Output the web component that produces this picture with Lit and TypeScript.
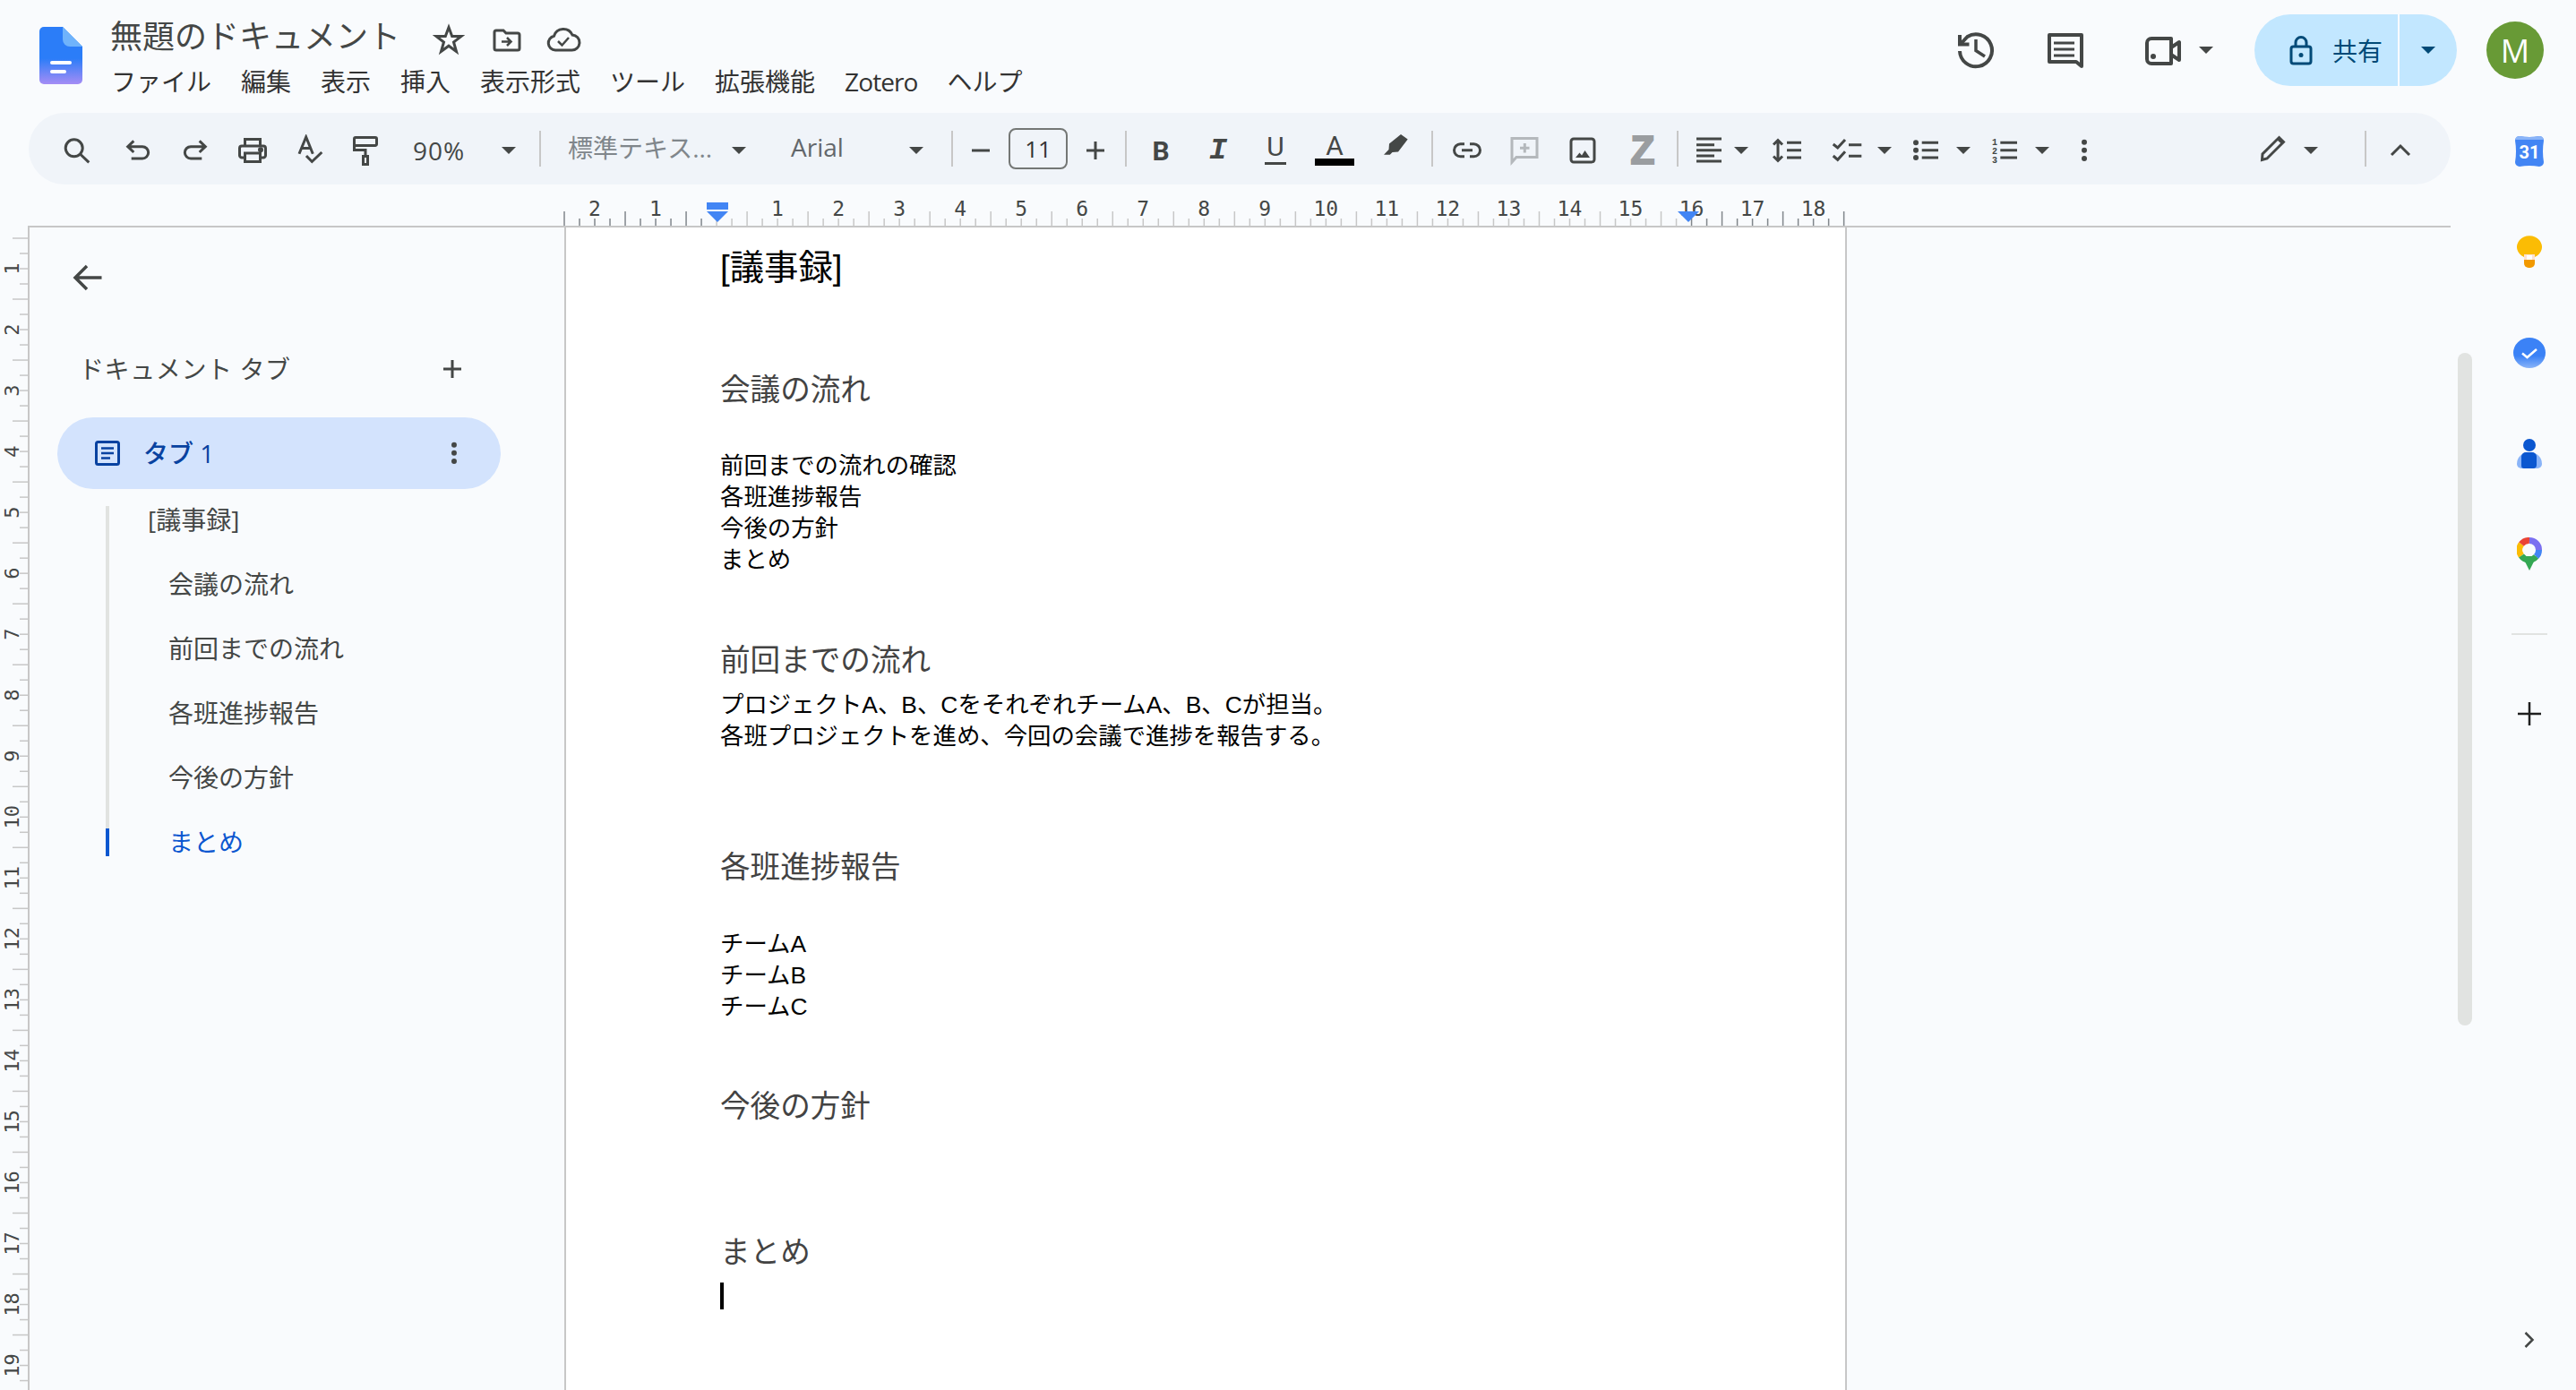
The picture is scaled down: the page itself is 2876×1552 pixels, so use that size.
import { LitElement, html, css, svg } from 'lit';
import { customElement } from 'lit/decorators.js';

const ico = (body: unknown, size = 36) =>
  html`<svg class="ico" width=${size} height=${size} viewBox="0 0 36 36">${body}</svg>`;

const caret = html`<span class="caret"></span>`;

// toolbar: c = centre x on the page, w = cell width
interface Tool { c: number; w: number; cls?: string; body?: unknown; }

const tool = (c: number, body: unknown, w = 36, cls = ''): Tool => ({ c, w, body, cls });
const car = (c: number): Tool => ({ c, w: 16, body: caret });
const sep = (c: number): Tool => ({ c, w: 2, cls: 'sep' });

const I = {
  search: svg`<circle cx="15.7" cy="15.3" r="9.5"/><path d="M22.5 22 32.3 31.3"/>`,
  undo: svg`<path d="M13.3 7.3 6.7 13.7 13.3 20M7 13.7H23a6.6 6.6 0 0 1 0 13.3H10.7"/>`,
  redo: svg`<path d="M22.7 7.3 29.3 13.7 22.7 20M29 13.7H13a6.6 6.6 0 0 0 0 13.3H25.3"/>`,
  print: svg`<path d="M9.5 13V5.5H26.5V13M9 26H6a2.5 2.5 0 0 1-2.5-2.5V15.500A2.500 2.500 0 0 1 6 13H30a2.500 2.500 0 0 1 2.500 2.500V23.500A2.500 2.500 0 0 1 30 26H27M9.500 21H26.500V30.500H9.500Z"/><circle class="f" cx="27" cy="17.300" r="1.500"/>`,
  spell: svg`<path d="M6 21.700 13.700 3 21.300 21.700M8.500 15.500H19M14 24 20.300 30.500 31.300 20"/>`,
  paint: svg`<path d="M7 3.500H29a1.500 1.500 0 0 1 1.500 1.500V11a1.500 1.500 0 0 1-1.500 1.500H7A1.500 1.500 0 0 1 5.500 11V5A1.500 1.500 0 0 1 7 3.500ZM5.500 8.500V17.500H18V24M15.500 24.500H20.500V33.500H15.500Z"/>`,
  minus: svg`<path d="M8 18H28"/>`,
  plus: svg`<path d="M8 18H28M18 8V28"/>`,
  bigplus: svg`<path stroke-width="2.500" d="M5 18H31M18 5V31"/>`,
  highlight: svg`<path class="f n" d="M24 0 31.700 5.500 21 19.500 14.500 20 11.800 22.700H5L10.500 17 11 10.500Z"/>`,
  link: svg`<path d="M15 10.800H10.500a7 7 0 0 0 0 14H15M21 10.800H25.500a7 7 0 0 1 0 14H21M12 17.800H24"/>`,
  comment: svg`<g class="dim"><path d="M4 4.500H32V25.500H9L4 31Z"/><path d="M18.300 10V20.500M13 15.200H23.500"/></g>`,
  image: svg`<rect x="5" y="5" width="26" height="26" rx="3"/><path class="f n" d="M10 26 14.500 20.500 17 23.500 20.500 18 26 26Z"/>`,
  align: svg`<path d="M4 5H32M4 11.700H24M4 17.700H32M4 24H24M4 30H32"/>`,
  spacing: svg`<path d="M8 7V29M3 11.500 8 6.500 13 11.500M3 24.500 8 29.500 13 24.500M18 9.300H34M18 17.700H34M18 26H34"/>`,
  checks: svg`<path d="M2.700 11 7.700 15 16 6M2.700 24 7.700 28.300 16 19.300M20 11.700H34.300M20 24.300H34.300"/>`,
  bullets: svg`<circle class="f n" cx="7" cy="9.300" r="3"/><circle class="f n" cx="7" cy="17.700" r="3"/><circle class="f n" cx="7" cy="26" r="3"/><path d="M13.700 9.300H32M13.700 17.700H32M13.700 26H32"/>`,
  numbers: svg`<path d="M13.300 9.300H32M13.300 17.700H32M13.300 26H32"/><text class="num" x="7" y="12">1</text><text class="num" x="7" y="22">2</text><text class="num" x="7" y="32">3</text>`,
  more: svg`<circle class="f n" cx="18" cy="8.700" r="3"/><circle class="f n" cx="18" cy="17.700" r="3"/><circle class="f n" cx="18" cy="27" r="3"/>`,
  pencil: svg`<path d="M5.500 28.500 6 22 24.500 3.500 29.500 8.500 11 27Z"/><path class="f n" d="M24.500 2.500 30.500 8.500 27.500 11 22 6Z"/>`,
  chevUp: svg`<path d="M8 23 18 13 28 23"/>`,
};

const tools: Tool[] = [
  tool(85, ico(I.search)), tool(154, ico(I.undo)), tool(218, ico(I.redo)), tool(282, ico(I.print)),
  tool(346, ico(I.spell)), tool(408, ico(I.paint)),
  tool(490, '90%', 64, 'zoom'), car(568), sep(603),
  tool(716, '標準テキス...', 164, 'dimtext'), car(825),
  tool(915, 'Arial', 64, 'dimtext fontname'), car(1023), sep(1063),
  tool(1095, ico(I.minus)), tool(1159, '11', 66, 'size'), tool(1223, ico(I.plus)), sep(1257),
  tool(1296, 'B', 36, 'bold'), tool(1360, 'I', 36, 'ital'),
  tool(1424, html`<span class="ltr">U</span><span class="ubar"></span>`, 36, 'stack'),
  tool(1490, html`<span class="ltr">A</span><span class="cbar"></span>`, 44, 'stack'),
  tool(1558, ico(I.highlight)), sep(1599),
  tool(1638, ico(I.link)), tool(1702, ico(I.comment)), tool(1767, ico(I.image)),
  tool(1834, 'Z', 36, 'zed'), sep(1873),
  tool(1908, ico(I.align)), car(1944), tool(1995, ico(I.spacing)), tool(2062, ico(I.checks)), car(2104),
  tool(2150, ico(I.bullets)), car(2192), tool(2238, ico(I.numbers)), car(2280), tool(2327, ico(I.more)),
  tool(2538, ico(I.pencil)), car(2580), sep(2641), tool(2680, ico(I.chevUp)),
];

const menus = ['ファイル', '編集', '表示', '挿入', '表示形式', 'ツール', '拡張機能', 'Zotero', 'ヘルプ'];

const outline = [
  { t: '[議事録]', cls: 'top' },
  { t: '会議の流れ', cls: '' },
  { t: '前回までの流れ', cls: '' },
  { t: '各班進捗報告', cls: '' },
  { t: '今後の方針', cls: '' },
  { t: 'まとめ', cls: 'on' },
];

const CM = 68.03;

const hruler = () => {
  const ticks = [];
  for (let k = 0; k <= 84; k++) {
    const x = 630 + k * (CM / 4);
    const long = k % 4 === 0;
    const dark = x < 800 || x > 1886;
    ticks.push(svg`<line x1=${x} x2=${x} y1=${long ? 30 : 38} y2="46" stroke=${dark ? '#80868b' : '#c7c7c7'} stroke-width="1.500"/>`);
  }
  const labels = [-2, -1, ...Array.from({ length: 18 }, (_, i) => i + 1)];
  return html`<svg class="ruler" width="2736" height="48" viewBox="0 0 2736 48">
    <rect x="31" y="46" width="2705" height="2" fill="#c7c7c7"/>
    ${ticks}
    ${labels.map(n => svg`<text class="rnum" x=${800 + n * CM} y="34.500">${Math.abs(n)}</text>`)}
    <rect x="789" y="20" width="24" height="8" fill="#4285f4"/>
    <path d="M789 30H813L801 42Z" fill="#4285f4"/>
    <path d="M1873 30H1897L1885 42Z" fill="#4285f4"/>
  </svg>`;
};

const vruler = () => {
  const ticks = [];
  for (let k = 0; k <= 76; k++) {
    const y = 12 + k * (CM / 4);
    const long = k % 4 === 0;
    ticks.push(svg`<line x1=${long ? 14 : 22} x2="31" y1=${y} y2=${y} stroke="#c7c7c7" stroke-width="1.500"/>`);
  }
  return html`<svg class="vruler" width="33" height="1298" viewBox="0 0 33 1298">
    <rect x="31" y="0" width="2" height="1298" fill="#c7c7c7"/>
    ${ticks}
    ${Array.from({ length: 19 }, (_, i) => i + 1).map(n => {
      const y = 46 + (n - 1) * CM;
      return svg`<text class="rnum side" transform="translate(20.500 ${y}) rotate(-90)">${n}</text>`;
    })}
  </svg>`;
};

@customElement('app-root')
export class AppRoot extends LitElement {
  static styles = css`
    :host {
      display: flex;
      flex-direction: column;
      width: 2876px;
      height: 1552px;
      overflow: hidden;
      background: #f9fbfd;
      color: #444746;
      font-family: 'Open Sans', 'Noto Sans CJK JP', sans-serif;
    }
    .ico { display: block; fill: none; stroke: currentColor; stroke-width: 3; }
    .ico .f { fill: currentColor; }
    .ico .n { stroke: none; }
    .ico .dim { stroke: #b4b8bc; }
    .ico .num { font: 700 10px 'Liberation Mono', monospace; text-anchor: middle; fill: currentColor; stroke: none; }

    header { display: flex; height: 124px; flex: none; }
    .logo { margin: 30px 0 0 44px; flex: none; }
    .titles { margin-left: 31px; padding-top: 21px; }
    .titlerow { display: flex; align-items: center; height: 40px; }
    .title { font-size: 36px; line-height: 40px; width: 324px; }
    .titlerow .ico { margin-top: 6px; }
    .star { margin-left: 36px; }
    .folder { margin-left: 29px; }
    .cloud { margin-left: 25px; }
    .menus { display: flex; gap: 33px; margin: 10px 0 0 1px; font-size: 28px; line-height: 40px; color: #333; }
    .menus .latin { letter-spacing: -0.900px; }

    .actions { display: flex; align-items: center; margin-left: auto; height: 80px; margin-top: 16px; padding-right: 36px; }
    .comment-btn { margin-left: 55px; }
    .video-btn { margin-left: 65px; }
    .video-car { margin-left: 19px; }
    .share { display: flex; height: 80px; margin-left: 46px; color: #004a77; }
    .share-l { display: flex; align-items: center; width: 160px; padding-left: 38px; box-sizing: border-box; gap: 21px; background: #c2e7ff; border-radius: 40px 0 0 40px; font-size: 28px; white-space: nowrap; }
    .share-r { display: flex; align-items: center; justify-content: center; width: 64px; margin-left: 2px; box-sizing: border-box; background: #c2e7ff; border-radius: 0 40px 40px 0; }
    .share .caret { border-top-color: #004a77; }
    .avatar { width: 64px; height: 64px; margin-left: 33px; border-radius: 50%; background: #689a36; color: #fff; font-size: 36px; display: flex; align-items: center; justify-content: center; }

    .body { display: flex; flex: 1; min-height: 0; }
    .main { display: flex; flex-direction: column; width: 2736px; flex: none; }
    .toolbar { display: flex; align-items: center; box-sizing: border-box; height: 80px; margin: 2px 0 0 32px; padding-top: 4px; background: #f0f4f9; border-radius: 40px; flex: none; font-size: 28px; }
    .cell { display: flex; align-items: center; justify-content: center; flex: none; }
    .caret { display: block; width: 0; height: 0; border-left: 8px solid transparent; border-right: 8px solid transparent; border-top: 8px solid #444746; flex: none; }
    .sep { width: 2px; height: 40px; background: #c7c7c7; margin-top: -4px; }
    .zoom { letter-spacing: 1px; white-space: nowrap; }
    .dimtext { justify-content: flex-start; color: #80868b; white-space: nowrap; margin-bottom: 8px; }
    .fontname { color: #63676b; }
    .size { height: 46px; box-sizing: border-box; border: 2px solid #747775; border-radius: 8px; font-size: 26px; color: #333; margin-bottom: 4px; }
    .bold { font: 700 30px Roboto, sans-serif; }
    .ital { font: italic 700 34px 'Liberation Mono', monospace; }
    .stack { flex-direction: column; }
    .ltr { font: 400 30px/24px Roboto, sans-serif; }
    .ubar { width: 24px; height: 3px; margin-top: 5px; background: #444746; }
    .cbar { width: 44px; height: 8px; margin-top: 2px; background: #000; }
    .zed { font: 700 44px/36px 'Liberation Sans', sans-serif; color: #9a9da0; -webkit-text-stroke: 2px #9a9da0; }

    .ruler { display: block; flex: none; }
    .vruler { display: block; flex: none; }
    .rnum { font: 400 23px 'DejaVu Sans Mono', monospace; fill: #444746; text-anchor: middle; }
    .rnum.side { font-size: 22px; }

    .work { display: flex; flex: 1; min-height: 0; }
    .sidebar { width: 597px; flex: none; }
    .back { margin: 34px 0 0 43px; width: 44px; height: 44px; }
    .back .ico { stroke-width: 3.500; }
    .sechead { display: flex; align-items: center; height: 44px; margin-top: 58px; padding-left: 55px; font-size: 28px; }
    .sechead span { margin-top: -3px; letter-spacing: 0.600px; }
    .sechead .ico { margin-left: 162px; }
    .tab { display: flex; align-items: center; height: 80px; width: 495px; margin: 32px 0 0 31px; border-radius: 40px; background: #d3e3fd; color: #0842a0; font-size: 28px; font-weight: 500; }
    .tab .doc { margin-left: 42px; }
    .tab span { margin: -2px 0 0 26px; }
    .tab .dots { margin-left: 250px; color: #444746; }
    .outline { display: flex; flex-direction: column; gap: 41px; margin: 19px 0 0 85px; border-left: 4px solid #e1e3e1; font-size: 28px; }
    .outline div { height: 31px; line-height: 31px; padding-left: 66px; white-space: nowrap; }
    .outline .top { padding-left: 43px; }
    .outline .on { margin-left: -4px; border-left: 4px solid #0b57d0; color: #0b57d0; }

    .page { width: 1432px; flex: none; box-sizing: border-box; padding: 22px 0 0 172px; background: #fff; border-left: 2px solid #c7c7c7; border-right: 2px solid #c7c7c7; color: #000; font-family: 'Liberation Sans', 'Noto Sans CJK JP', sans-serif; }
    .page h1 { margin: 0; font-size: 38.4px; font-weight: 400; line-height: 46px; }
    .page h2 { margin: 0; font-size: 33.6px; font-weight: 400; line-height: 42px; color: #434343; }
    .page p { margin: 0; font-size: 26.4px; line-height: 35px; }
    .g93 { margin-top: 93px !important; }
    .g46 { margin-top: 46px !important; }
    .g74 { margin-top: 74px !important; }
    .g11 { margin-top: 11px !important; }
    .g108 { margin-top: 108px !important; }
    .g47 { margin-top: 47px !important; }
    .g73 { margin-top: 73px !important; }
    .g121 { margin-top: 121px !important; }
    .cursor { width: 4px; height: 30px; margin-top: 12px; background: #000; }

    .track { width: 24px; flex: none; padding-left: 8px; box-sizing: border-box; }
    .thumb { width: 16px; height: 751px; margin-top: 270px; background: #e1e3e1; border-radius: 8px; }

    .panel { display: flex; flex-direction: column; align-items: center; box-sizing: border-box; width: 116px; flex: none; padding: 23px 0 38px 12px; }
    .slot { display: flex; align-items: center; justify-content: center; width: 44px; height: 44px; flex: none; }
    .slot + .slot { margin-top: 68.400px; }
    .hr { width: 40px; height: 2px; margin-top: 66px; background: #e1e3e1; flex: none; }
    .addon { margin-top: 66px; color: #1f1f1f; }
    .chev { margin-top: auto; }
    svg text.cal { font: 700 20px Roboto, sans-serif; fill: #fff; text-anchor: middle; }
  `;

  private toolbar() {
    let right = 32;
    return tools.map(t => {
      const left = t.c - t.w / 2;
      const gap = left - right;
      right = t.c + t.w / 2;
      return html`<div class="cell ${t.cls}" style="margin-left:${gap}px;width:${t.w}px">${t.body}</div>`;
    });
  }

  render() {
    return html`
      <header>
        <svg class="logo" width="48" height="64" viewBox="0 0 48 64">
          <defs>
            <linearGradient id="docg" x1="0" y1="0" x2="0" y2="1">
              <stop offset="0.550" stop-color="#2b7df8"/>
              <stop offset="1" stop-color="#a58df5"/>
            </linearGradient>
          </defs>
          <path d="M5 0H26L48 22V59a5 5 0 0 1-5 5H5a5 5 0 0 1-5-5V5a5 5 0 0 1 5-5Z" fill="url(#docg)"/>
          <path d="M26 0 48 22H34a8 8 0 0 1-8-8Z" fill="#6fb3fb"/>
          <rect x="12" y="38" width="24" height="4" rx="2" fill="#fff"/>
          <rect x="12" y="48" width="18" height="4" rx="2" fill="#fff"/>
        </svg>
        <div class="titles">
          <div class="titlerow">
            <div class="title">無題のドキュメント</div>
            <svg class="ico star" width="36" height="36" viewBox="0 0 36 36"><path d="M18 4.500 21.700 14.500H32L23.500 21 26.500 31.500 18 25.200 9.500 31.500 12.500 21 4 14.500H14.300Z"/></svg>
            <svg class="ico folder" width="36" height="36" viewBox="0 0 36 36"><path d="M4 10a2 2 0 0 1 2-2H14L17 11H30a2 2 0 0 1 2 2V28a2 2 0 0 1-2 2H6a2 2 0 0 1-2-2Z"/><path stroke-width="2.500" d="M12 20.500H22M18 16 22.500 20.500 18 25"/></svg>
            <svg class="ico cloud" width="40" height="36" viewBox="0 0 40 36"><path d="M11 30a8 8 0 0 1-1.500-15.800A11 11 0 0 1 30 13a8.500 8.500 0 0 1-1 17Z"/><path stroke-width="2.500" d="M14 20 18.500 24.500 26 16"/></svg>
          </div>
          <div class="menus">${menus.map(m => html`<span class=${m === 'Zotero' ? 'latin' : ''}>${m}</span>`)}</div>
        </div>
        <div class="actions">
          <svg class="ico" width="44" height="44" viewBox="-22 -22 44 44" stroke-width="4"><path d="M-18 -17V-6.500H-7.500" stroke-width="4"/><path stroke-width="4" d="M-16.500 -7.500-9.500 -15A18 18 0 1 1-18 1"/><path stroke-width="3.500" d="M0 -12V0.500L10 7"/></svg>
          <svg class="ico comment-btn" width="44" height="44" viewBox="-22 -22 44 44"><path stroke-width="4" stroke-linejoin="round" d="M-17 -17H19V18L13 13H-17Z"/><path stroke-width="3" d="M-12 -8H11M-12 -1H11M-12 6H11"/></svg>
          <svg class="ico video-btn" width="44" height="44" viewBox="-22 -22 44 44"><path stroke-width="4" stroke-linejoin="round" d="M-12 -13H10V15H-12a5 5 0 0 1-5-5V-8a5 5 0 0 1 5-5ZM10 -3 19 -9V11L10 5"/><circle class="f n" cx="-10" cy="7" r="3"/></svg>
          <span class="caret video-car"></span>
          <div class="share">
            <div class="share-l">
              <svg class="ico" width="28" height="36" viewBox="0 0 28 36"><rect x="3" y="14" width="22" height="19" rx="2.500"/><path d="M8 14V9.500a6 6 0 0 1 12 0V14"/><circle class="f n" cx="14" cy="23.500" r="2.500"/></svg>
              <span>共有</span>
            </div>
            <div class="share-r">${caret}</div>
          </div>
          <div class="avatar">M</div>
        </div>
      </header>

      <div class="body">
        <div class="main">
          <div class="toolbar">${this.toolbar()}</div>
          ${hruler()}
          <div class="work">
            ${vruler()}
            <aside class="sidebar">
              <div class="back"><svg class="ico" width="44" height="44" viewBox="0 0 44 44"><path d="M37.500 22H8M21 9 8 22 21 35"/></svg></div>
              <div class="sechead"><span>ドキュメント タブ</span>${ico(I.plus)}</div>
              <div class="tab">
                <svg class="ico doc" width="28" height="28" viewBox="0 0 28 28"><rect x="1.500" y="1.500" width="25" height="25" rx="2"/><path stroke-width="2.500" d="M7 8.500H21M7 14H21M7 19.500H17"/></svg>
                <span>タブ 1</span>
                <svg class="ico dots" width="36" height="36" viewBox="0 0 36 36">${I.more}</svg>
              </div>
              <nav class="outline">${outline.map(o => html`<div class=${o.cls}>${o.t}</div>`)}</nav>
            </aside>
            <article class="page">
              <h1>[議事録]</h1>
              <h2 class="g93">会議の流れ</h2>
              <p class="g46">前回までの流れの確認</p>
              <p>各班進捗報告</p>
              <p>今後の方針</p>
              <p>まとめ</p>
              <h2 class="g74">前回までの流れ</h2>
              <p class="g11">プロジェクトA、B、CをそれぞれチームA、B、Cが担当。</p>
              <p>各班プロジェクトを進め、今回の会議で進捗を報告する。</p>
              <h2 class="g108">各班進捗報告</h2>
              <p class="g47">チームA</p>
              <p>チームB</p>
              <p>チームC</p>
              <h2 class="g73">今後の方針</h2>
              <h2 class="g121">まとめ</h2>
              <div class="cursor"></div>
            </article>
          </div>
        </div>
        <div class="track"><div class="thumb"></div></div>
        <aside class="panel">
          <div class="slot">
            <svg width="32" height="34" viewBox="0 0 32 34">
              <path d="M5 0Q16 2 27 0a5 5 0 0 1 5 5Q30 17 32 29a5 5 0 0 1-5 5Q16 32 5 34a5 5 0 0 1-5-5Q2 17 0 5a5 5 0 0 1 5-5Z" fill="#4285f4"/>
              <path d="M5 0Q16 2 27 0a5 5 0 0 1 5 4H0a5 5 0 0 1 5-4Z" fill="#8ab4f8"/>
              <text class="cal" x="16" y="25">31</text>
            </svg>
          </div>
          <div class="slot">
            <svg width="28" height="36" viewBox="0 0 28 36">
              <path d="M8 24a14 12.500 0 1 1 12 0Z" fill="#fbbc04"/>
              <rect x="8" y="21" width="12" height="7" fill="#fde2d0"/>
              <rect x="11" y="22" width="6" height="5" fill="#fff"/>
              <path d="M8 27H20V31a5 5 0 0 1-5 5H13a5 5 0 0 1-5-5Z" fill="#f29900"/>
            </svg>
          </div>
          <div class="slot">
            <svg width="36" height="34" viewBox="0 0 36 34">
              <defs><linearGradient id="tg" x1="0" y1="0" x2="0" y2="1"><stop offset="0.600" stop-color="#3b82f6"/><stop offset="1" stop-color="#8ab4f8"/></linearGradient></defs>
              <ellipse cx="18" cy="17" rx="18" ry="17" fill="url(#tg)"/>
              <path d="M10 17.500 15.500 22 26 13" fill="none" stroke="#fff" stroke-width="2.500"/>
            </svg>
          </div>
          <div class="slot">
            <svg width="28" height="33" viewBox="0 0 28 33">
              <path d="M5 33H23a5 5 0 0 0 5-5 13 13 0 0 0-13-13H13A13 13 0 0 0 0 28 5 5 0 0 0 5 33Z" fill="#8ab4f8"/>
              <path d="M8 33H18a4 4 0 0 0 4-4V20a5 5 0 0 0-5-5H10a5 5 0 0 0-5 5V30a3 3 0 0 0 3 3Z" fill="#0b57d0"/>
              <ellipse cx="14" cy="7" rx="7" ry="7" fill="#0b57d0"/>
            </svg>
          </div>
          <div class="slot">
            <svg width="28" height="37" viewBox="0 0 28 37" fill="none" stroke-width="7">
              <path d="M6 21 14 37 22 21Z" fill="#34a853"/>
              <path d="M5 20.500A10.500 10.500 0 0 1 5 7.500" stroke="#fbbc04"/>
              <path d="M5 7.500A10.500 10.500 0 0 1 14 3.500" stroke="#ea4335"/>
              <path d="M14 3.500A10.500 10.500 0 0 1 24.500 14" stroke="#7b6ff0"/>
              <path d="M24.500 14A10.500 10.500 0 0 1 21.500 21.500" stroke="#4285f4"/>
              <path d="M21.500 21.500A10.500 10.500 0 0 1 5 20.500" stroke="#34a853"/>
            </svg>
          </div>
          <div class="hr"></div>
          <div class="slot addon">${ico(I.bigplus)}</div>
          <div class="chev"><svg class="ico" width="36" height="36" viewBox="0 0 36 36"><path stroke-width="2.500" d="M13.500 10 21.500 18 13.500 26"/></svg></div>
        </aside>
      </div>
    `;
  }
}
